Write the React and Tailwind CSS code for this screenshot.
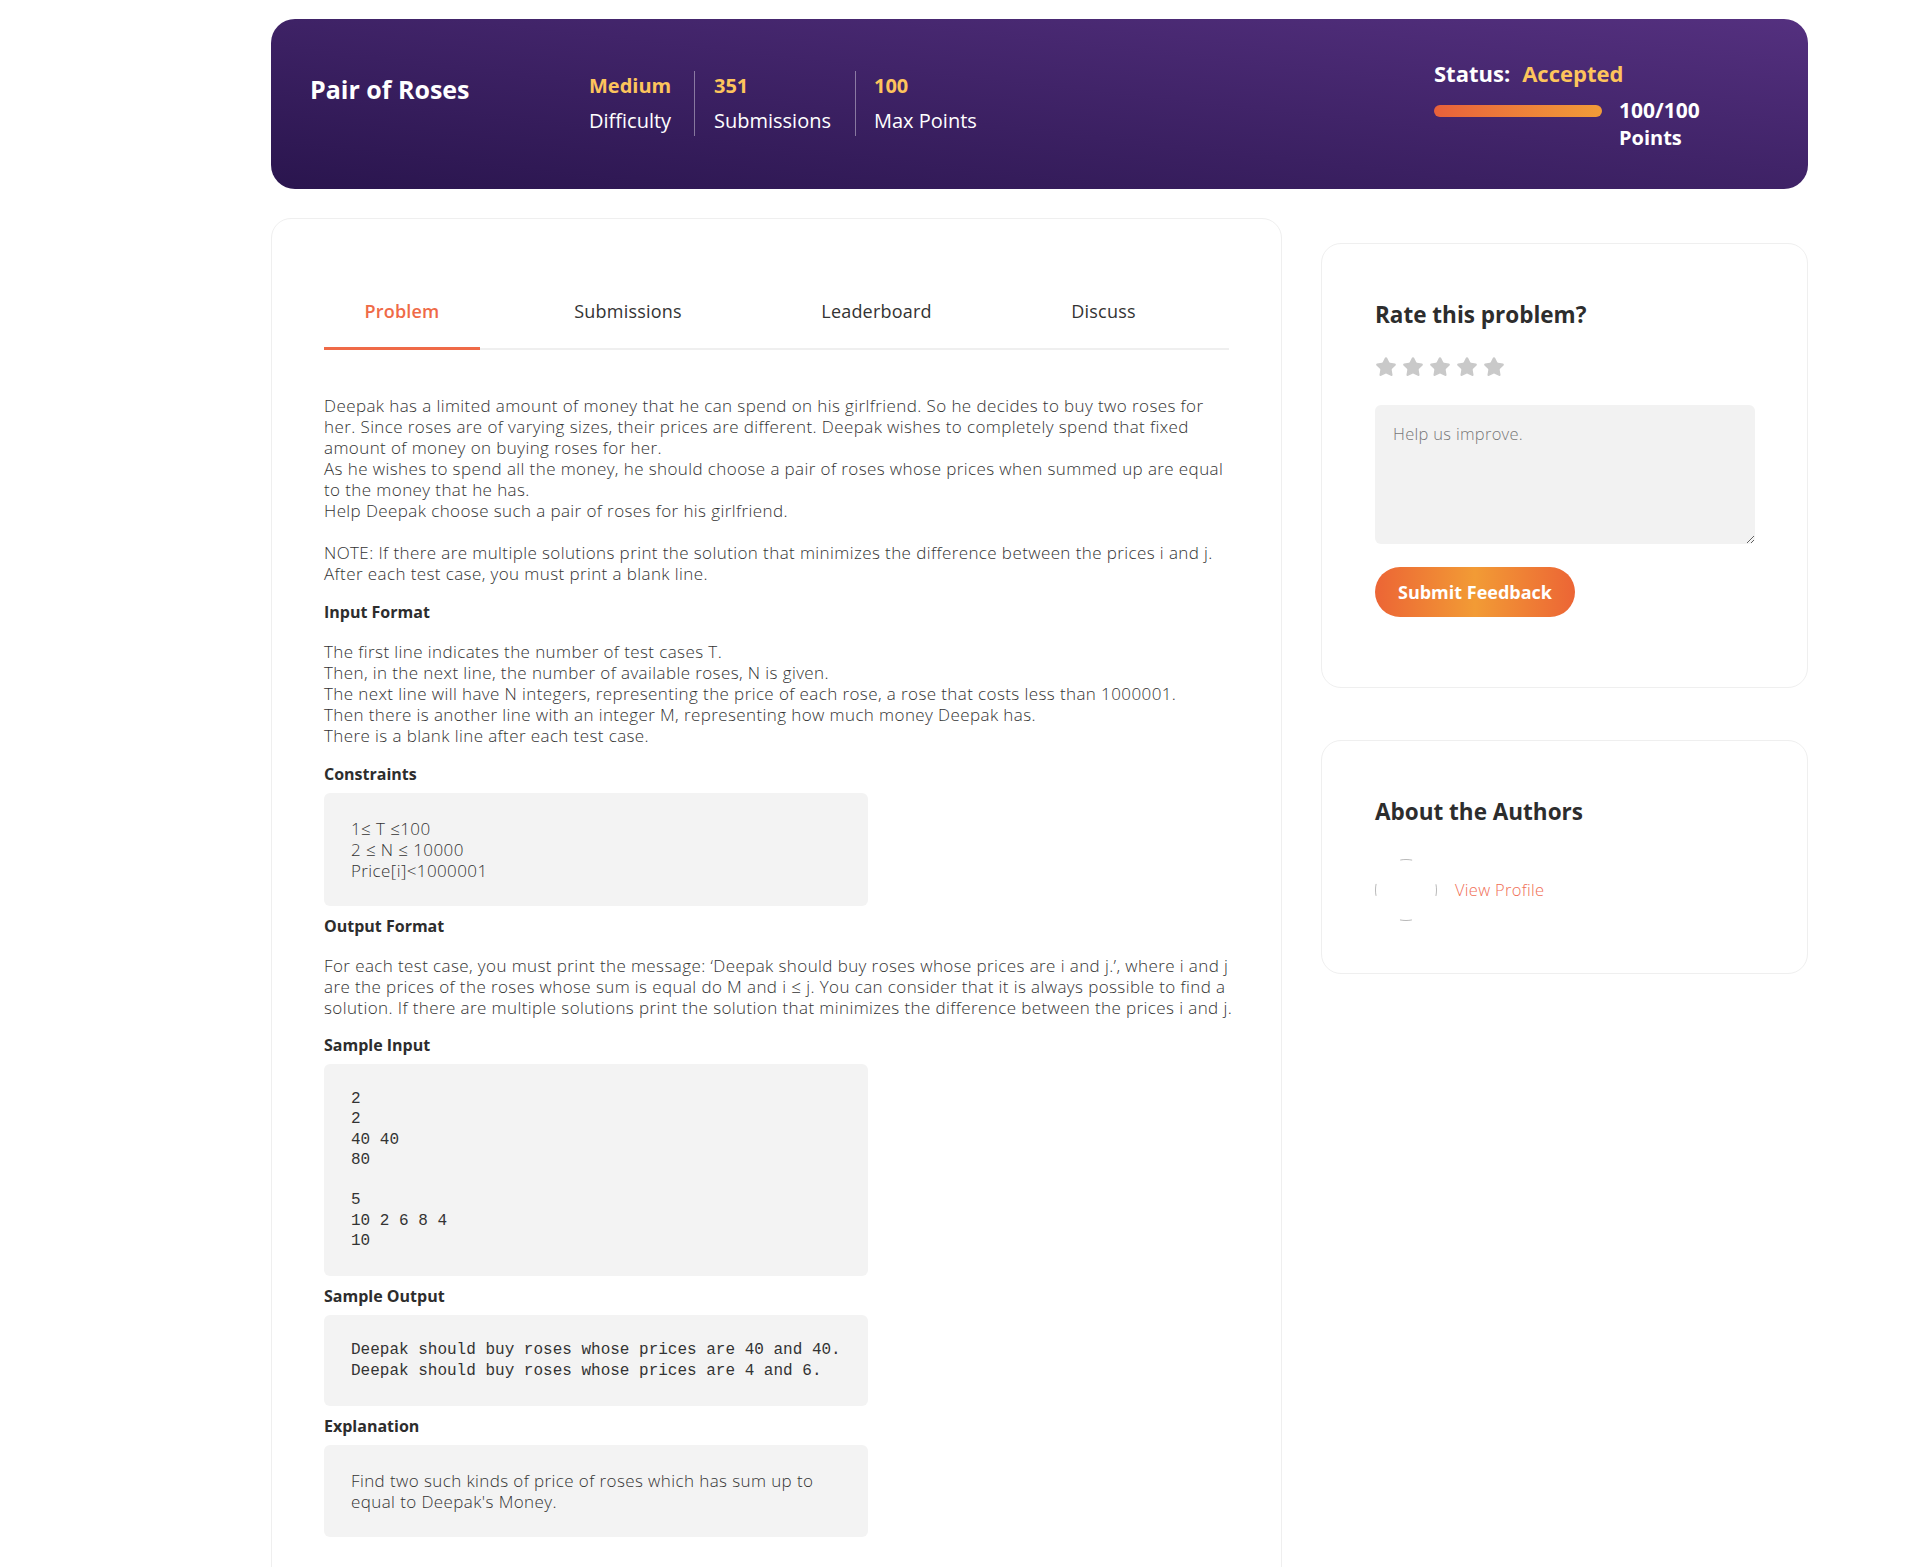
import { Star } from "lucide-react";

const font = { fontFamily: "'Open Sans', Lato, sans-serif" };

function Stat({ value, label, className }) {
  return (
    <div className={`py-[3px] ${className}`}>
      <div className="text-[20px] leading-[24px] font-bold text-[#fdc45c]">{value}</div>
      <div className="mt-[11px] text-[20px] leading-[24px] text-white">{label}</div>
    </div>
  );
}

function Banner() {
  return (
    <div className="flex items-start rounded-[24px] bg-linear-to-tr from-[#2a154e] to-[#54307f] h-[170px] pl-[39px] pr-[100px] pt-[40px]">
      <h1 className="mt-[14px] w-[279px] text-[25px] leading-[32px] font-bold text-white">Pair of Roses</h1>
      <div className="mt-[12px] flex">
        <Stat value="Medium" label="Difficulty" className="w-[105px]" />
        <Stat value="351" label="Submissions" className="w-[161px] pl-[19px] border-l border-white/40" />
        <Stat value="100" label="Max Points" className="pl-[18px] border-l border-white/40" />
      </div>
      <div className="ml-auto w-[274px]">
        <div className="flex gap-[12px] text-[22px] leading-[28px] font-bold">
          <span className="text-white">Status:</span>
          <span className="text-[#fdc45c]">Accepted</span>
        </div>
        <div className="mt-[10px] flex items-start gap-[17px]">
          <div className="mt-[8px] h-[12px] w-[168px] rounded-full bg-linear-to-r from-[#e8603a] to-[#f19c38]" />
          <div className="text-[21px] leading-[26px] font-bold text-white">
            <div>100/100</div>
            <div className="mt-[2px] text-[20px]">Points</div>
          </div>
        </div>
      </div>
    </div>
  );
}

const tabs = [
  { name: "Problem", w: "w-[156px]" },
  { name: "Submissions", w: "w-[190px]" },
  { name: "Leaderboard", w: "w-[201px]" },
  { name: "Discuss", w: "w-[147px]" },
];

function Tabs() {
  return (
    <div className="flex gap-[53px] border-b-2 border-[#efefef]">
      {tabs.map((t, i) => (
        <div
          key={t.name}
          className={`-mb-[2px] ${t.w} pb-[22px] text-center text-[18px] leading-[28px] tracking-[0.2px] ${
            i === 0
              ? "border-b-[3px] border-[#ef6a47] text-[#ef6a47] font-semibold"
              : "border-b-[3px] border-transparent text-[#333]"
          }`}
        >
          {t.name}
        </div>
      ))}
    </div>
  );
}

function Heading({ children, className = "" }) {
  return <h3 className={`text-[16px] leading-[21px] font-bold tracking-normal text-[#2d2d2d] ${className}`}>{children}</h3>;
}

function Box({ children, mono, className = "" }) {
  return (
    <div
      className={`w-[544px] rounded-[6px] bg-[#f3f3f3] px-[27px] py-[25px] text-[#333] ${
        mono
          ? "text-[16px] leading-[20.3px] font-normal tracking-normal whitespace-pre"
          : "text-[17px] leading-[21px] font-light tracking-[0.4px]"
      } ${className}`}
      style={mono ? { fontFamily: "'Liberation Mono', 'DejaVu Sans Mono', monospace" } : undefined}
    >
      {children}
    </div>
  );
}

function ProblemCard() {
  return (
    <div className="w-[1011px] shrink-0 rounded-[20px] border border-[#efefef] bg-white px-[52px] pt-[78px] pb-[60px]">
      <Tabs />
      <div className="mt-[45px] text-[17px] leading-[21px] font-light tracking-[0.4px] text-[#333]">
        <p className="whitespace-nowrap">
          Deepak has a limited amount of money that he can spend on his girlfriend. So he decides to buy two roses for
          <br />
          her. Since roses are of varying sizes, their prices are different. Deepak wishes to completely spend that fixed
          <br />
          amount of money on buying roses for her.
          <br />
          As he wishes to spend all the money, he should choose a pair of roses whose prices when summed up are equal
          <br />
          to the money that he has.
          <br />
          Help Deepak choose such a pair of roses for his girlfriend.
        </p>
        <p className="mt-[21px]">
          NOTE: If there are multiple solutions print the solution that minimizes the difference between the prices i and j.
          <br />
          After each test case, you must print a blank line.
        </p>

        <Heading className="mt-[18px]">Input Format</Heading>
        <p className="mt-[18px]">
          The first line indicates the number of test cases T.
          <br />
          Then, in the next line, the number of available roses, N is given.
          <br />
          The next line will have N integers, representing the price of each rose, a rose that costs less than 1000001.
          <br />
          Then there is another line with an integer M, representing how much money Deepak has.
          <br />
          There is a blank line after each test case.
        </p>

        <Heading className="mt-[18px]">Constraints</Heading>
        <Box className="mt-[8px]">
          1≤ T ≤100
          <br />2 ≤ N ≤ 10000
          <br />
          Price[i]&lt;1000001
        </Box>

        <Heading className="mt-[10px]">Output Format</Heading>
        <p className="mt-[18px] whitespace-nowrap">
          For each test case, you must print the message: ‘Deepak should buy roses whose prices are i and j.’, where i and j
          <br />
          are the prices of the roses whose sum is equal do M and i ≤ j. You can consider that it is always possible to find a
          <br />
          solution. If there are multiple solutions print the solution that minimizes the difference between the prices i and j.
        </p>

        <Heading className="mt-[17px]">Sample Input</Heading>
        <Box mono className="mt-[8px]">
          {"2\n2\n40 40\n80\n\n5\n10 2 6 8 4\n10"}
        </Box>

        <Heading className="mt-[10px]">Sample Output</Heading>
        <Box mono className="mt-[8px]">
          {"Deepak should buy roses whose prices are 40 and 40.\nDeepak should buy roses whose prices are 4 and 6."}
        </Box>

        <Heading className="mt-[10px]">Explanation</Heading>
        <Box className="mt-[8px]">
          Find two such kinds of price of roses which has sum up to
          <br />
          equal to Deepak's Money.
        </Box>
      </div>
    </div>
  );
}

function RateCard() {
  return (
    <div className="rounded-[20px] border border-[#efefef] bg-white pl-[53px] pr-[52px] pt-[57px] pb-[70px]">
      <h2 className="text-[22.5px] leading-[28px] font-bold text-[#2d2d2d]">Rate this problem?</h2>
      <div className="mt-[27px] flex gap-[5px]">
        {[0, 1, 2, 3, 4].map((i) => (
          <Star key={i} size={22} fill="#c9c9c9" stroke="#c9c9c9" strokeWidth={1.5} />
        ))}
      </div>
      <textarea
        placeholder="Help us improve."
        className="mt-[27px] block h-[139px] w-[380px] rounded-[6px] bg-[#f2f2f2] px-[18px] py-[18px] text-[16.5px] leading-[21px] font-light tracking-[0.3px] text-[#333] placeholder:text-[#777] outline-none"
      />
      <button className="mt-[23px] h-[50px] w-[200px] rounded-full bg-[linear-gradient(90deg,#ec6535,#f29b35_50%,#ec6535)] text-[18px] font-bold text-white">
        Submit Feedback
      </button>
    </div>
  );
}

function AuthorsCard() {
  return (
    <div className="mt-[52px] rounded-[20px] border border-[#efefef] bg-white pl-[53px] pr-[52px] pt-[57px] pb-[52px]">
      <h2 className="text-[22.5px] leading-[28px] font-bold text-[#2d2d2d]">About the Authors</h2>
      <div className="mt-[33px] flex items-center gap-[18px]">
        <svg width="62" height="62" viewBox="0 0 62 62">
          <circle
            cx="31"
            cy="31"
            r="30.5"
            fill="none"
            stroke="#b9b9b9"
            strokeWidth="1"
            strokeDasharray="12 35.9"
            strokeDashoffset="6"
          />
        </svg>
        <a className="text-[16.5px] font-light tracking-[0.3px] text-[#f06e55]">View Profile</a>
      </div>
    </div>
  );
}

export default function App() {
  return (
    <div className="min-h-screen bg-white pl-[271px] pt-[19px]" style={font}>
      <div className="w-[1537px]">
        <Banner />
        <div className="mt-[29px] flex items-start gap-[39px]">
          <ProblemCard />
          <div className="mt-[25px] w-[487px]">
            <RateCard />
            <AuthorsCard />
          </div>
        </div>
      </div>
    </div>
  );
}
